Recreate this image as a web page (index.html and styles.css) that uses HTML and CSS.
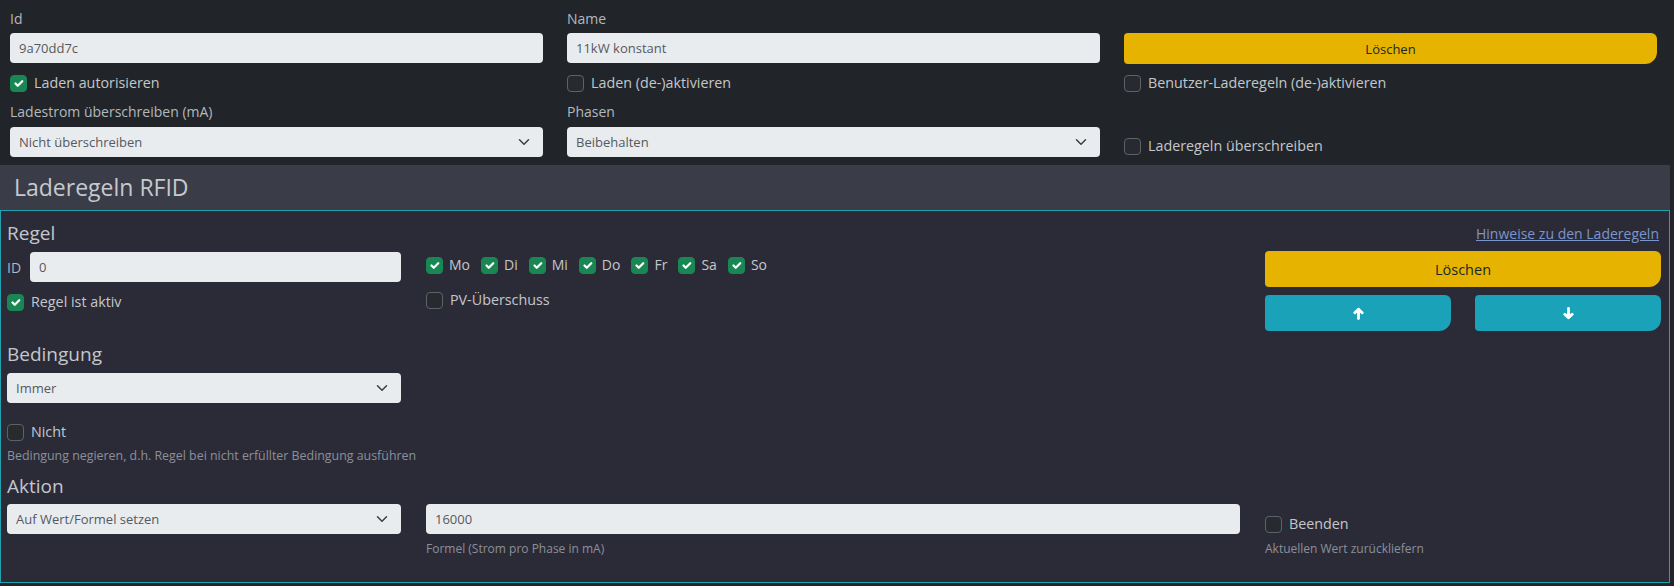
FILE: index.html
```html
<!DOCTYPE html>
<html lang="de">
<head>
<meta charset="utf-8">
<title>Laderegeln RFID</title>
<link rel="stylesheet" href="styles.css">
</head>
<body>
<div class="page">
  <div class="top">
    <div class="lbl c1 r1">Id</div>
    <div class="lbl c2 r1">Name</div>
    <div class="field c1 r2">9a70dd7c</div>
    <div class="field c2 r2">11kW konstant</div>
    <div class="btn btn-warn btn-sm c3 r2">Löschen</div>
    <div class="check c1 r3"><span class="box on"><svg viewBox="0 0 20 20"><path d="m6 10 3 3 6-6"/></svg></span>Laden autorisieren</div>
    <div class="check c2 r3"><span class="box"></span>Laden (de-)aktivieren</div>
    <div class="check c3 r3"><span class="box"></span>Benutzer-Laderegeln (de-)aktivieren</div>
    <div class="lbl c1 r4">Ladestrom überschreiben (mA)</div>
    <div class="lbl c2 r4">Phasen</div>
    <div class="field select c1 r5"><span>Nicht überschreiben</span><svg class="chev" viewBox="0 0 16 16"><path d="m2 5 6 6 6-6"/></svg></div>
    <div class="field select c2 r5"><span>Beibehalten</span><svg class="chev" viewBox="0 0 16 16"><path d="m2 5 6 6 6-6"/></svg></div>
    <div class="check c3 r5 low"><span class="box"></span>Laderegeln überschreiben</div>
  </div>

  <div class="rules">
    <div class="rules-head">Laderegeln RFID</div>
    <div class="rules-body">
      <div class="title-row">
        <div class="h5">Regel</div>
        <a class="hint" href="#">Hinweise zu den Laderegeln</a>
      </div>
      <div class="grid3 regel">
        <div class="col">
          <div class="id-row"><span class="id-lbl">ID</span><div class="field grow">0</div></div>
          <div class="check mt10"><span class="box on"><svg viewBox="0 0 20 20"><path d="m6 10 3 3 6-6"/></svg></span>Regel ist aktiv</div>
        </div>
        <div class="col">
          <div class="days">
            <div class="check day"><span class="box on"><svg viewBox="0 0 20 20"><path d="m6 10 3 3 6-6"/></svg></span>Mo</div>
            <div class="check day"><span class="box on"><svg viewBox="0 0 20 20"><path d="m6 10 3 3 6-6"/></svg></span>Di</div>
            <div class="check day"><span class="box on"><svg viewBox="0 0 20 20"><path d="m6 10 3 3 6-6"/></svg></span>Mi</div>
            <div class="check day"><span class="box on"><svg viewBox="0 0 20 20"><path d="m6 10 3 3 6-6"/></svg></span>Do</div>
            <div class="check day"><span class="box on"><svg viewBox="0 0 20 20"><path d="m6 10 3 3 6-6"/></svg></span>Fr</div>
            <div class="check day"><span class="box on"><svg viewBox="0 0 20 20"><path d="m6 10 3 3 6-6"/></svg></span>Sa</div>
            <div class="check day"><span class="box on"><svg viewBox="0 0 20 20"><path d="m6 10 3 3 6-6"/></svg></span>So</div>
          </div>
          <div class="check mt10"><span class="box"></span>PV-Überschuss</div>
        </div>
        <div class="col">
          <div class="btn btn-warn btn-lg">Löschen</div>
          <div class="arrows">
            <div class="btn btn-info btn-lg"><svg class="arrow" viewBox="0 0 10 12"><path d="M5 10.6V2 M1.6 5.4 5 2 8.4 5.4"/></svg></div>
            <div class="btn btn-info btn-lg"><svg class="arrow" viewBox="0 0 10 12"><path d="M5 1.4V10 M1.6 6.6 5 10 8.4 6.6"/></svg></div>
          </div>
        </div>
      </div>

      <div class="h5 sec-bed">Bedingung</div>
      <div class="grid3">
        <div class="col">
          <div class="field select"><span>Immer</span><svg class="chev" viewBox="0 0 16 16"><path d="m2 5 6 6 6-6"/></svg></div>
        </div>
      </div>
      <div class="check nicht"><span class="box"></span>Nicht</div>
      <div class="help wide">Bedingung negieren, d.h. Regel bei nicht erfüllter Bedingung ausführen</div>

      <div class="h5 sec-akt">Aktion</div>
      <div class="grid3 aktion">
        <div class="col">
          <div class="field select"><span>Auf Wert/Formel setzen</span><svg class="chev" viewBox="0 0 16 16"><path d="m2 5 6 6 6-6"/></svg></div>
        </div>
        <div class="col">
          <div class="field">16000</div>
          <div class="help">Formel (Strom pro Phase in mA)</div>
        </div>
        <div class="col">
          <div class="check beenden"><span class="box"></span>Beenden</div>
          <div class="help">Aktuellen Wert zurückliefern</div>
        </div>
      </div>
    </div>
  </div>
</div>
</body>
</html>
```

FILE: styles.css
```css
* { box-sizing: border-box; }
html, body { margin: 0; padding: 0; }
body {
  background: #212529;
  font-family: "Open Sans", "Noto Sans", "DejaVu Sans", sans-serif;
  color: #c3c7cc;
  width: 1674px;
  height: 586px;
  overflow: hidden;
}
.page { width: 1674px; }

/* top form */
.top {
  display: grid;
  grid-template-columns: 533px 533px 533px;
  column-gap: 24px;
  padding: 8px 0 0 10px;
  height: 165px;
  align-content: start;
}
.c1 { grid-column: 1; }
.c2 { grid-column: 2; }
.c3 { grid-column: 3; }
.r1 { grid-row: 1; }
.r2 { grid-row: 2; }
.r3 { grid-row: 3; }
.r4 { grid-row: 4; }
.r5 { grid-row: 5; }

.lbl {
  font-size: 14px;
  line-height: 22px;
  color: #b4b8be;
}
.top .r2 { margin-top: 3px; }
.top .r3 { margin-top: 9px; }
.top .r4 { margin-top: 8px; }
.top .r5 { margin-top: 4px; }
.top .low { align-self: center; margin-top: 12px; }

.field {
  height: 30px;
  background: #e9ecef;
  border-radius: 4px;
  color: #55595f;
  font-size: 13px;
  line-height: 30px;
  padding: 0 9px;
  white-space: nowrap;
}
.select {
  display: flex;
  align-items: center;
  justify-content: space-between;
  padding-right: 12px;
}
.chev {
  width: 14px;
  height: 12px;
  fill: none;
  stroke: #3a3f45;
  stroke-width: 2;
  stroke-linecap: round;
  stroke-linejoin: round;
}

.btn {
  display: flex;
  align-items: center;
  justify-content: center;
  border-radius: 4px 6px 12px 4px;
  color: #212529;
}
.btn-warn { background: #e6b400; }
.btn-info { background: #19a2b8; }
.btn-sm { height: 31px; font-size: 13px; }
.btn-lg { height: 36px; font-size: 14.5px; }

.check {
  display: flex;
  align-items: center;
  font-size: 14.3px;
  line-height: 20px;
  color: #c3c7cc;
  white-space: nowrap;
}
.box {
  width: 17px;
  height: 17px;
  border-radius: 4px;
  border: 1px solid #5d6269;
  background: #272b30;
  margin-right: 7px;
  flex: none;
  display: flex;
  align-items: center;
  justify-content: center;
}
.box.on {
  background: #198754;
  border-color: #198754;
}
.box svg {
  width: 15px;
  height: 15px;
  fill: none;
  stroke: #fff;
  stroke-width: 3;
  stroke-linecap: round;
  stroke-linejoin: round;
}

/* rules box */
.rules { width: 1670px; }
.rules-head {
  height: 45px;
  background: #3a3d48;
  color: #c5c9d0;
  font-size: 23px;
  line-height: 45px;
  padding-left: 14px;
}
.rules-body {
  border: 1px solid #22a2b1;
  background: #2b2b38;
  height: 373px;
  padding: 0 8px 0 6px;
}
.title-row {
  display: flex;
  align-items: center;
  justify-content: space-between;
  margin-top: 10px;
  height: 24px;
}
.h5 {
  font-size: 19px;
  line-height: 24px;
  color: #c3c7cc;
}
.hint {
  font-size: 14px;
  color: #7b95cc;
  text-decoration: underline;
  margin-right: 2px;
}

.grid3 {
  display: grid;
  grid-template-columns: 394px 814px 396px;
  column-gap: 25px;
  align-items: start;
}
.regel { margin-top: 6px; }
.col { display: flex; flex-direction: column; }
.id-row {
  display: flex;
  align-items: center;
  margin-top: 1px;
}
.id-lbl {
  font-size: 14px;
  color: #b4b8be;
  width: 23px;
}
.grow { flex: 1; }
.mt10 { margin-top: 10px; }

.days {
  display: flex;
  align-items: center;
  height: 30px;
  margin-top: -1px;
}
.day { margin-right: 11px; font-size: 14px; }
.day .box { margin-right: 6px; }

.arrows {
  display: grid;
  grid-template-columns: 1fr 1fr;
  column-gap: 24px;
  margin-top: 8px;
}
.arrow {
  width: 11px;
  height: 13px;
  fill: none;
  stroke: #fff;
  stroke-width: 2.6;
  stroke-linecap: round;
  stroke-linejoin: round;
}

.sec-bed { margin-top: 11px; }
.sec-bed + .grid3 { margin-top: 7px; }
.nicht { margin-top: 19px; }
.help {
  font-size: 12px;
  line-height: 18px;
  color: #8b9098;
  margin-top: 6px;
  white-space: nowrap;
}
.help.wide { font-size: 12.4px; margin-top: 5px; }
.sec-akt { margin-top: 9px; }
.aktion { margin-top: 6px; }
.beenden { margin-top: 10px; }
```
